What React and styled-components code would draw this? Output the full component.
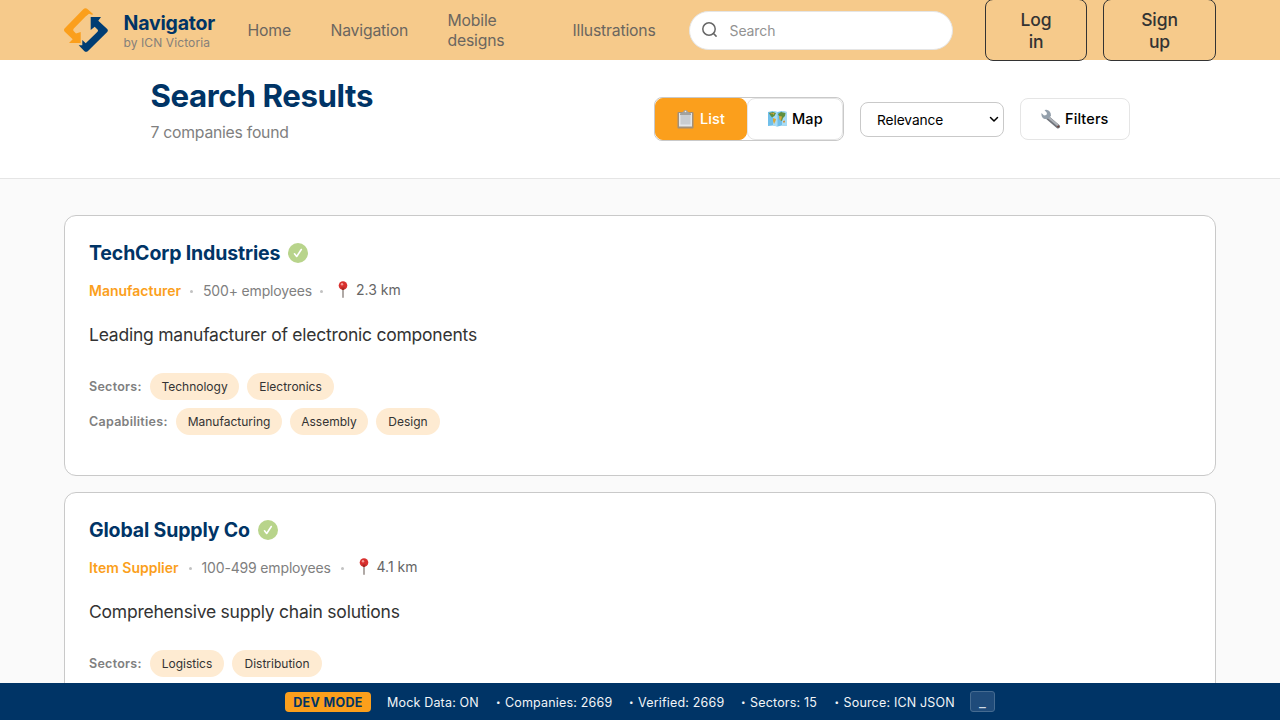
import React from "react";
import styled, { createGlobalStyle } from "styled-components";

const GlobalStyle = createGlobalStyle`
  *, *::before, *::after { box-sizing: border-box; }
  html, body { margin: 0; height: 100%; overflow: hidden; background: #fafafa; }
  body {
    font-family: Inter, "Liberation Sans", sans-serif;
    color: #333333;
    white-space: nowrap;
  }
  h1, h2, p { margin: 0; }
  button, input { font-family: inherit; }
`;

const Page = styled.div`
  height: 720px;
  overflow: hidden;
`;

const Header = styled.header`
  display: flex;
  align-items: center;
  height: 60px;
  padding: 0 64px;
  background: #f6ca8b;
  position: relative;
`;

const Brand = styled.div`
  display: flex;
  align-items: center;
  gap: 15.5px;
  width: 183.5px;
  flex: none;
`;

const BrandText = styled.div`
  display: flex;
  flex-direction: column;
  padding-top: 1px;
`;

const BrandName = styled.span`
  font-size: 19.5px;
  font-weight: 700;
  line-height: 22px;
  padding-bottom: 2px;
  letter-spacing: -0.2px;
  color: #003466;
`;

const BrandSub = styled.span`
  font-size: 12px;
  line-height: 14px;
  letter-spacing: 0.1px;
  color: #85807a;
`;

const Nav = styled.nav`
  display: flex;
  align-items: center;
  gap: 40px;
  flex: none;
`;

const NavLink = styled.a`
  width: ${(p) => p.$width}px;
  padding-top: 2px;
  font-size: 15.75px;
  line-height: 20px;
  letter-spacing: -0.18px;
  color: #6b665f;
  white-space: pre-line;
`;

const SearchBox = styled.label`
  display: flex;
  align-items: center;
  gap: 11px;
  width: 264px;
  height: 39px;
  margin-left: 32px;
  padding: 0 11px;
  border: 1px solid #e5e5e5;
  border-radius: 20px;
  background: #ffffff;
  flex: none;
`;

const SearchInput = styled.input`
  width: 180px;
  padding: 0;
  border: 0;
  outline: 0;
  background: none;
  font-size: 14px;
  letter-spacing: -0.1px;
  &::placeholder { color: #929292; opacity: 1; }
`;

const Auth = styled.div`
  display: flex;
  gap: 16px;
  margin-left: 32px;
  flex: none;
`;

const AuthButton = styled.button`
  width: ${(p) => p.$width}px;
  height: 62px;
  padding: 2px 0 0 1px;
  border: 1px solid #333333;
  border-radius: 8px;
  background: transparent;
  color: #333333;
  font-size: 17.5px;
  font-weight: 500;
  line-height: 22px;
  letter-spacing: -0.1px;
  white-space: pre-line;
`;

const Toolbar = styled.section`
  display: flex;
  justify-content: space-between;
  height: 119px;
  padding: 16px 150px 0 150.5px;
  border-bottom: 1px solid #e5e5e5;
  background: #ffffff;
`;

const Title = styled.h1`
  font-size: 31.25px;
  font-weight: 700;
  line-height: 40px;
  letter-spacing: -0.4px;
  color: #003466;
`;

const Count = styled.p`
  margin-top: 7px;
  font-size: 15.75px;
  line-height: 20px;
  letter-spacing: -0.25px;
  color: #808080;
`;

const Controls = styled.div`
  display: flex;
  align-items: center;
  gap: 16px;
  height: 86px;
`;

const Toggle = styled.div`
  display: flex;
  width: 190px;
  height: 44px;
  border: 1px solid #c9c9c9;
  border-radius: 8px;
  background: #ffffff;
`;

const ToolButton = styled.button`
  display: flex;
  align-items: center;
  gap: ${(p) => p.$gap || 5}px;
  width: ${(p) => p.$width}px;
  height: 42px;
  padding: 0 0 1px 20px;
  border: 1px solid ${(p) => (p.$active ? "#fb9f1c" : "#e5e5e5")};
  border-radius: 8px;
  background: ${(p) => (p.$active ? "#fb9f1c" : "#ffffff")};
  color: ${(p) => (p.$active ? "#ffffff" : "#000000")};
  font-size: 14.5px;
  font-weight: 500;
  letter-spacing: 0.1px;
`;

const SortSelect = styled.button`
  display: flex;
  align-items: center;
  justify-content: space-between;
  width: 144px;
  height: 35px;
  padding: 1px 4px 0 16px;
  border: 1px solid #c9c9c9;
  border-radius: 8px;
  background: #ffffff;
  color: #000000;
  font-size: 13.75px;
  letter-spacing: -0.1px;
`;

const Results = styled.main`
  display: flex;
  flex-direction: column;
  gap: 16px;
  padding: 36px 64px 0;
`;

const Card = styled.article`
  height: 261px;
  padding: 24px;
  border: 1px solid #c9c9c9;
  border-radius: 12px;
  background: #ffffff;
  flex: none;
`;

const CardHead = styled.div`
  display: flex;
  align-items: center;
  gap: 8px;
  height: 26px;
`;

const Company = styled.h2`
  width: ${(p) => p.$width}px;
  font-size: 19.5px;
  font-weight: 700;
  line-height: 26px;
  letter-spacing: -0.15px;
  color: #003466;
`;

const Meta = styled.div`
  display: flex;
  align-items: center;
  height: 20px;
  margin-top: 15px;
  font-size: 14px;
  line-height: 20px;
  letter-spacing: -0.16px;
  color: #808080;
`;

const Kind = styled.span`
  width: ${(p) => p.$width}px;
  font-weight: 600;
  letter-spacing: 0;
  color: #fb9f1c;
`;

const Employees = styled.span`
  width: ${(p) => p.$width}px;
`;

const Dot = styled.i`
  width: 3px;
  height: 3px;
  margin: 1px 10px 0 9px;
  border-radius: 50%;
  background: #c2c2c2;
`;

const Distance = styled.span`
  display: flex;
  align-items: center;
  gap: 8px;
  height: 20px;
  margin: -3px 0 0 5px;
  letter-spacing: 0;
  color: #666666;
`;

const Description = styled.p`
  margin-top: 21px;
  font-size: 17.5px;
  line-height: 26px;
  letter-spacing: -0.23px;
  color: #333333;
`;

const Tags = styled.div`
  display: flex;
  flex-direction: column;
  gap: 8px;
  margin-top: 25px;
`;

const TagRow = styled.div`
  display: flex;
  align-items: center;
  gap: 8px;
  height: 27px;
`;

const TagLabel = styled.span`
  width: ${(p) => p.$width}px;
  padding-bottom: 1px;
  font-size: 12.5px;
  font-weight: 600;
  letter-spacing: 0.28px;
  color: #808080;
`;

const Tag = styled.span`
  width: ${(p) => p.$width}px;
  height: 27px;
  border-radius: 14px;
  background: #feebd2;
  color: #333333;
  font-size: 12px;
  line-height: 27px;
  text-align: center;
`;

const DevBar = styled.footer`
  position: fixed;
  inset: auto 0 0 0;
  display: flex;
  align-items: center;
  height: 37px;
  padding-left: 285px;
  background: #003466;
  color: #f2f5f8;
  font-size: 12.5px;
  letter-spacing: 0.18px;
`;

const DevBadge = styled.strong`
  width: 86px;
  height: 20px;
  margin-right: 16px;
  border-radius: 4px;
  background: #fb9f1c;
  color: #003466;
  font-weight: 700;
  line-height: 21px;
  letter-spacing: 0.35px;
  text-align: center;
`;

const DevItem = styled.span`
  display: flex;
  align-items: center;
  width: ${(p) => p.$width}px;
  padding-top: 1px;
`;

const Bullet = styled.span`
  width: 9px;
  font-size: 8px;
`;

const Minimize = styled.button`
  width: 25px;
  height: 21px;
  padding: 0;
  border: 1px solid #456b91;
  border-radius: 3px;
  background: #1f4b7a;
  color: #d0dae4;
  font-size: 15px;
  line-height: 14px;
`;

const Logo = () => (
  <svg width="44" height="44" viewBox="0 0 44 44">
    <path fill="#fb9f1c" d="M.8 20.300 19.300 1.200Q21.500-.8 23.700 1.200L29.300 6.300 28 6.700 25 5.800 21.300 8.800 9.800 20.500Q8.700 22 9.800 23.300L12 25.500 16.700 24V34.900H5L8.700 31.300.8 23.800Q-.8 22 .8 20.300Z" />
    <path fill="#003d73" d="M26.700 9H37L34.300 12.700 43.200 21Q44.500 22.500 43.200 24L24 43Q22 44.700 20.200 43L14.700 37.300H18.300V32L21.700 35.300 33.500 23.700Q34.500 22.600 33.500 21.500L30.700 18.700 26.700 22Z" />
  </svg>
);

const SearchIcon = () => (
  <svg width="18" height="18" viewBox="0 0 18 18" fill="none" stroke="#666" strokeWidth="1.500" strokeLinecap="round">
    <circle cx="8" cy="8" r="6.200" />
    <path d="m12.500 12.500 2.600 2.600" />
  </svg>
);

const ClipboardIcon = () => (
  <svg width="19" height="20" viewBox="0 0 19 20">
    <rect x="1.500" y="3" width="16" height="16.500" rx="1" fill="#a1907a" />
    <path d="M3 4h13v13.500H3z" fill="#e3e6e9" />
    <path d="M4.500 6h10v9.500h-10z" fill="#c9cdd1" />
    <path d="M4 4.500 7 3q.5-2 2.500-2T12 3l3 1.500V6H4Z" fill="#a2a29f" />
    <circle cx="9.500" cy="2.500" r=".8" fill="#eee" />
  </svg>
);

const MapIcon = () => (
  <svg width="19" height="18" viewBox="0 0 19 18">
    <path fill="#70bfea" d="m0 2 5-1 4.500 1L14 1l5 1v14l-5-.5-4.500 1-4.500-1-5 .5Z" />
    <path fill="#a8dcf5" d="M5 1v14.500l4.500 1V2ZM14 1v14.500l5 .5V2Z" />
    <path fill="#5f8f3e" d="m1 3 4-1 3 1-1.500 3L4 7.500 2 5ZM10 4l3-2 4.500 1L17 6l-2 2-1 3-2-1-.5-3Z" />
    <path fill="#d8a83e" d="m5 8 3 1-.5 2L6 14 5 11ZM11 6l3 .5-1 4-1.500-1ZM4 3l2.500 0-1 2Z" />
    <path fill="#cf9442" d="m15 11 2-.5v2h-2ZM2 4l2-1v1Z" />
  </svg>
);

const WrenchIcon = () => (
  <svg width="20" height="20" viewBox="0 0 20 20">
    <path d="M6.500 8.500 17 17.500" stroke="#70747b" strokeWidth="4" strokeLinecap="round" />
    <path d="m7 8 9.500 8" stroke="#adb2b8" strokeWidth="2.200" strokeLinecap="round" />
    <path fill="#94a0ac" d="M5.500.7 3.500 1 6 4l-.6 2L3 6.500.5 4Q0 7.500 2.500 9.500q2 1 4 .3L10 7Q10 1.500 5.500.7Z" />
    <circle cx="17.200" cy="17.400" r="1" fill="#70423b" />
  </svg>
);

const PinIcon = () => (
  <svg width="10" height="18" viewBox="0 0 10 18">
    <path d="M5 8v8.300" stroke="#8f8580" strokeWidth="1.400" strokeLinecap="round" />
    <circle cx="5" cy="4.500" r="4.300" fill="#d8302e" />
    <path d="M3.200 6.500 4.200 9h1.600l1-2.500Z" fill="#a52a26" />
    <circle cx="4" cy="3.200" r="1.200" fill="#f49a95" />
  </svg>
);

const VerifiedIcon = () => (
  <svg width="20" height="20" viewBox="0 0 20 20">
    <circle cx="10" cy="10" r="10" fill="#b8d48b" />
    <path d="m6.500 10.800 2.200 2.700 4.600-7" fill="none" stroke="#fff" strokeWidth="1.600" strokeLinecap="round" strokeLinejoin="round" />
  </svg>
);

const Chevron = () => (
  <svg width="10" height="7" viewBox="0 0 10 7" fill="none" stroke="#000" strokeWidth="1.500" strokeLinecap="round" strokeLinejoin="round">
    <path d="m1.500 1.500 3.500 3.500 3.500-3.500" />
  </svg>
);

const links = [["Home", 43], ["Navigation", 77], ["Mobile\ndesigns", 85], ["Illustrations", 84]];

const companies = [
  {
    name: "TechCorp Industries", nameWidth: 191, kind: "Manufacturer", kindWidth: 92,
    employees: "500+ employees", employeesWidth: 108, distance: "2.3 km",
    description: "Leading manufacturer of electronic components",
    sectors: [["Technology", 89], ["Electronics", 87]],
    capabilities: [["Manufacturing", 106], ["Assembly", 78], ["Design", 64]],
  },
  {
    name: "Global Supply Co", nameWidth: 161, kind: "Item Supplier", kindWidth: 90.5,
    employees: "100-499 employees", employeesWidth: 130, distance: "4.1 km",
    description: "Comprehensive supply chain solutions",
    sectors: [["Logistics", 74], ["Distribution", 90]],
    capabilities: [],
  },
];

const stats = [
  ["Companies: 2669", 133],
  ["Verified: 2669", 112],
  ["Sectors: 15", 93.5],
  ["Source: ICN JSON", 135.5],
];

const TagList = ({ label, width, items }) => (
  <TagRow>
    <TagLabel $width={width}>{label}</TagLabel>
    {items.map(([text, w]) => <Tag key={text} $width={w}>{text}</Tag>)}
  </TagRow>
);

const CompanyCard = ({ company: c }) => (
  <Card>
    <CardHead>
      <Company $width={c.nameWidth}>{c.name}</Company>
      <VerifiedIcon />
    </CardHead>
    <Meta>
      <Kind $width={c.kindWidth}>{c.kind}</Kind>
      <Dot />
      <Employees $width={c.employeesWidth}>{c.employees}</Employees>
      <Dot />
      <Distance><PinIcon />{c.distance}</Distance>
    </Meta>
    <Description>{c.description}</Description>
    <Tags>
      <TagList label="Sectors:" width={53} items={c.sectors} />
      {c.capabilities.length > 0 && <TagList label="Capabilities:" width={79} items={c.capabilities} />}
    </Tags>
  </Card>
);

export default function App() {
  return (
    <Page>
      <GlobalStyle />
      <Header>
        <Brand>
          <Logo />
          <BrandText>
            <BrandName>Navigator</BrandName>
            <BrandSub>by ICN Victoria</BrandSub>
          </BrandText>
        </Brand>
        <Nav>
          {links.map(([text, w]) => <NavLink key={text} $width={w}>{text}</NavLink>)}
        </Nav>
        <SearchBox>
          <SearchIcon />
          <SearchInput placeholder="Search" />
        </SearchBox>
        <Auth>
          <AuthButton $width={102}>{"Log\nin"}</AuthButton>
          <AuthButton $width={113}>{"Sign\nup"}</AuthButton>
        </Auth>
      </Header>
      <Toolbar>
        <div>
          <Title>Search Results</Title>
          <Count>7 companies found</Count>
        </div>
        <Controls>
          <Toggle>
            <ToolButton $active $width={92}><ClipboardIcon />List</ToolButton>
            <ToolButton $width={96}><MapIcon />Map</ToolButton>
          </Toggle>
          <SortSelect>Relevance<Chevron /></SortSelect>
          <ToolButton $width={110} $gap={4}><WrenchIcon />Filters</ToolButton>
        </Controls>
      </Toolbar>
      <Results>
        {companies.map((c) => <CompanyCard key={c.name} company={c} />)}
      </Results>
      <DevBar>
        <DevBadge>DEV MODE</DevBadge>
        <DevItem $width={109}>Mock Data: ON</DevItem>
        {stats.map(([text, w]) => (
          <DevItem key={text} $width={w}><Bullet>•</Bullet>{text}</DevItem>
        ))}
        <Minimize>_</Minimize>
      </DevBar>
    </Page>
  );
}
